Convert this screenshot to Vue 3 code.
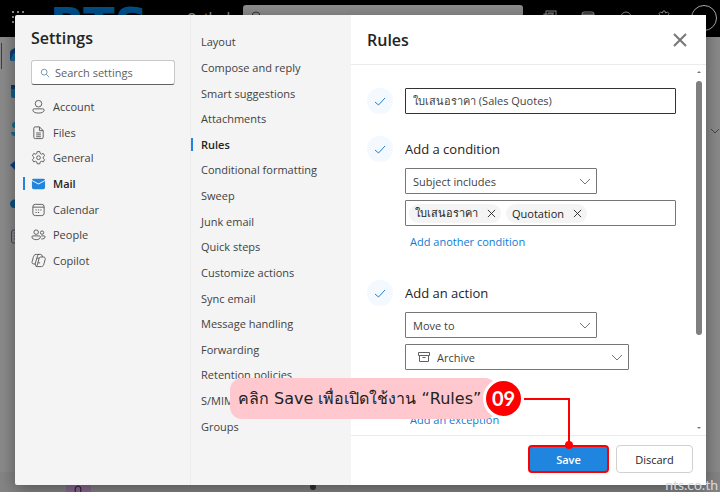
<script setup>
import { ref } from 'vue'

const sections = [
  { id: 'account', label: 'Account' },
  { id: 'files', label: 'Files' },
  { id: 'general', label: 'General' },
  { id: 'mail', label: 'Mail' },
  { id: 'calendar', label: 'Calendar' },
  { id: 'people', label: 'People' },
  { id: 'copilot', label: 'Copilot' }
]

const categories = [
  'Layout',
  'Compose and reply',
  'Smart suggestions',
  'Attachments',
  'Rules',
  'Conditional formatting',
  'Sweep',
  'Junk email',
  'Quick steps',
  'Customize actions',
  'Sync email',
  'Message handling',
  'Forwarding',
  'Retention policies',
  'S/MIME',
  'Groups'
]

const section = ref('mail')
const category = ref('Rules')
const search = ref('')
const ruleName = ref('ใบเสนอราคา (Sales Quotes)')
const condition = ref('Subject includes')
const action = ref('Move to')
const folder = ref('Archive')
const keywords = ref(['ใบเสนอราคา', 'Quotation'])

function removeKeyword(word) {
  keywords.value = keywords.value.filter((k) => k !== word)
}
</script>

<template>
  <div class="page">
    <!-- Dimmed mail app behind the dialog -->
    <div class="app" aria-hidden="true">
      <div class="topbar">
        <svg class="waffle" viewBox="0 0 13 13">
          <g fill="#8b8b8b">
            <rect x="0" y="0" width="2" height="2" /><rect x="5" y="0" width="2" height="2" /><rect x="10" y="0" width="2" height="2" />
            <rect x="0" y="5" width="2" height="2" /><rect x="5" y="5" width="2" height="2" /><rect x="10" y="5" width="2" height="2" />
            <rect x="0" y="10" width="2" height="2" /><rect x="5" y="10" width="2" height="2" /><rect x="10" y="10" width="2" height="2" />
          </g>
        </svg>
        <span class="logo">RTS</span>
        <span class="app-name">Outlook</span>
        <div class="app-search">
          <svg viewBox="0 0 12 12" class="icon12"><circle cx="5" cy="5" r="4" /><path d="M8 8l3.500 3.500" /></svg>
          <span>Search</span>
        </div>
        <svg class="top-icon" viewBox="0 0 14 14"><rect x="3" y="1" width="10" height="8" /><rect x="1" y="4" width="9" height="8" /><path d="M3 6h5M5 3h6" /></svg>
        <svg class="top-icon" viewBox="0 0 14 14"><rect x="1" y="2" width="12" height="11" rx="2" /><path d="M1 4h12M1 5h12" /></svg>
        <svg class="top-icon" viewBox="0 0 14 14"><path d="M2 11V7a5 5 0 0 1 10 0v4z" /></svg>
        <svg class="top-icon" viewBox="0 0 14 14"><path d="M5.500 3L6 1h2l.5 2 2-1 1.500 1.500-1 2 2 .5v2l-2 .5 1 2-1.500 1.500-2-1L8 13H6l-.5-2-2 1L2 10.500l1-2L1 8V6l2-.5-1-2L3.500 2z" /></svg>
        <span class="avatar"></span>
      </div>
      <div class="workspace">
        <svg class="rail" viewBox="0 0 24 220">
          <rect x="1" y="6" width="1" height="26" fill="#0b4a80" />
          <path d="M10 15q1-3 8-5v14h-6q-2 0-2-2z" fill="#0d3f78" />
          <path d="M11 22l2-5 5-3v10h-6z" fill="#1a6aa0" />
          <rect x="11" y="48" width="14" height="13" rx="2" fill="#12628f" />
          <rect x="11" y="48" width="14" height="4" fill="#0a3a66" />
          <circle cx="15" cy="88" r="3" fill="#1a6c92" />
          <path d="M11 95h12v4q-12 2-12-4z" fill="#1a6c92" />
          <path d="M10 128l5-4v9z" fill="#143c86" />
          <path d="M10 166q1-4 8-4v9h-4q-4 0-4-5z" fill="#0c5382" />
          <rect x="11.500" y="193" width="12" height="13" rx="2" fill="#8a8a8a" stroke="#3e4a5a" />
          <path d="M14 196h6M14 199h6M14 202h6" stroke="#3e4a5a" />
        </svg>
        <svg class="side-chevron" viewBox="0 0 8 5"><path d="M0 0l4 4 4-4" /></svg>
      </div>
      <div class="mail-row">
        <svg class="mail-avatar" viewBox="0 0 25 8"><ellipse cx="12" cy="6" rx="3" ry="4" /></svg>
        <span class="mail-dot"></span>
      </div>
    </div>

    <div class="dialog" role="dialog" aria-label="Settings">
      <aside class="sections">
        <h1>Settings</h1>
        <label class="search">
          <svg viewBox="0 0 12 12" class="search-icon"><circle cx="5" cy="5" r="3.500" /><path d="M7.500 7.500L11 11" /></svg>
          <input v-model="search" type="text" placeholder="Search settings" aria-label="Search settings" />
        </label>
        <nav class="section-list">
          <button
            v-for="s in sections"
            :key="s.id"
            type="button"
            class="nav-item"
            :class="{ active: section === s.id }"
            @click="section = s.id"
          >
            <svg class="nav-icon" viewBox="0 0 16 16">
              <template v-if="s.id === 'account'">
                <circle cx="8" cy="5" r="3.500" />
                <path d="M3.500 10.500h9a1.500 1.500 0 0 1 1.500 1.500c0 1.800-2.500 3-6 3s-6-1.200-6-3a1.500 1.500 0 0 1 1.500-1.500z" />
              </template>
              <template v-else-if="s.id === 'files'">
                <path d="M4.500 2H9l4 4v7a1.500 1.500 0 0 1-1.500 1.500h-7A1.500 1.500 0 0 1 3 13V3.500A1.500 1.500 0 0 1 4.500 2z" />
                <path d="M9 2v4h4M5.500 8.500h5M5.500 10.500h5M5.500 12.500h5" />
              </template>
              <template v-else-if="s.id === 'general'">
                <path d="M6.600 1.700h2.800l.4 2 1.300.7 2-.7 1.400 2.400-1.500 1.400v1.400l1.500 1.400-1.400 2.400-2-.7-1.300.7-.4 2H6.600l-.4-2-1.300-.7-2 .7-1.400-2.400L3 8.900V7.500L1.500 6.100l1.400-2.400 2 .7 1.300-.7z" />
                <circle cx="8" cy="8.200" r="2" />
              </template>
              <template v-else-if="s.id === 'mail'">
                <path class="solid" d="M1 5.200l7 3.800 7-3.800v6.800a2 2 0 0 1-2 2H3a2 2 0 0 1-2-2z" />
                <path class="solid" d="M3 3h10a2 2 0 0 1 2 1.300L8 8 1 4.300A2 2 0 0 1 3 3z" />
              </template>
              <template v-else-if="s.id === 'calendar'">
                <rect x="2" y="2.500" width="12" height="12" rx="2.500" />
                <path d="M2 5.500h12M4.800 8.500h1.400M7.300 8.500h1.400M9.800 8.500h1.400M4.800 11.200h1.400M7.300 11.200h1.400" />
              </template>
              <template v-else-if="s.id === 'people'">
                <circle cx="5.500" cy="5.500" r="2.400" />
                <circle cx="11.800" cy="6" r="1.800" />
                <path d="M2 9.500h7a1 1 0 0 1 1 1c0 2-2 3-4.500 3S1 12.500 1 10.500a1 1 0 0 1 1-1zM11 9.500h3a1 1 0 0 1 1 1c0 1.600-1.600 2.500-4 2.200" />
              </template>
              <template v-else>
                <path d="M6 1.500h4.300c1 0 1.300.6 1.600 1.500l.4 1.300h1c1.500 0 2.200 1 1.800 2.500l-1.300 4.700c-.4 1.500-1 3-2.600 3H6.500c-1 0-1.400-.6-1.700-1.500l-.4-1.300H3c-1.600 0-2.200-1-1.800-2.500l1.200-4.500c.5-1.800 1.200-3.200 3-3.200z" />
                <path d="M8.500 1.500c-1 0-1.400 1-1.600 1.700L4.400 11.700M12.300 4.300h-2c-1 0-1.400.6-1.700 1.600L7 11.500c-.3 1.500-.7 2.500-1.500 3M6.300 5.500h2.500M7.500 10.500h2.200" />
              </template>
            </svg>
            <span>{{ s.label }}</span>
          </button>
        </nav>
      </aside>

      <nav class="categories">
        <button
          v-for="c in categories"
          :key="c"
          type="button"
          class="cat-item"
          :class="{ active: category === c }"
          @click="category = c"
        >
          {{ c }}
        </button>
      </nav>

      <section class="panel">
        <header class="panel-head">
          <h2>Rules</h2>
          <button type="button" class="close" aria-label="Close">
            <svg viewBox="0 0 14 14"><path d="M1 1l12 12M13 1L1 13" /></svg>
          </button>
        </header>

        <div class="panel-body">
          <div class="steps">
            <div class="step step-name">
              <span class="check"><svg viewBox="0 0 12 9"><path d="M1 5l3.500 3L11 1" /></svg></span>
              <input v-model="ruleName" class="field name" type="text" aria-label="Rule name" />
            </div>

            <div class="step step-condition">
              <span class="check"><svg viewBox="0 0 12 9"><path d="M1 5l3.500 3L11 1" /></svg></span>
              <div class="step-main">
                <h3>Add a condition</h3>
                <div class="select">
                  <select v-model="condition" class="field" aria-label="Condition">
                    <option>Subject includes</option>
                    <option>From</option>
                  </select>
                  <svg class="chevron" viewBox="0 0 12 7"><path d="M1 1l5 5 5-5" /></svg>
                </div>
                <div class="field tokens">
                  <span v-for="k in keywords" :key="k" class="token">
                    {{ k }}
                    <button type="button" :aria-label="'Remove ' + k" @click="removeKeyword(k)">
                      <svg viewBox="0 0 10 10"><path d="M1 1l8 8M9 1L1 9" /></svg>
                    </button>
                  </span>
                  <input type="text" aria-label="Words to look for" />
                </div>
                <a href="#" class="add">Add another condition</a>
              </div>
            </div>

            <div class="step">
              <span class="check"><svg viewBox="0 0 12 9"><path d="M1 5l3.500 3L11 1" /></svg></span>
              <div class="step-main">
                <h3>Add an action</h3>
                <div class="select">
                  <select v-model="action" class="field" aria-label="Action">
                    <option>Move to</option>
                    <option>Copy to</option>
                  </select>
                  <svg class="chevron" viewBox="0 0 12 7"><path d="M1 1l5 5 5-5" /></svg>
                </div>
                <div class="select folder">
                  <svg class="archive" viewBox="0 0 12 11"><path d="M.5.500h11v3H.5zM1.500 3.500v6h9v-6M4.500 5.500h3" /></svg>
                  <select v-model="folder" class="field" aria-label="Folder">
                    <option>Archive</option>
                    <option>Inbox</option>
                  </select>
                  <svg class="chevron" viewBox="0 0 12 7"><path d="M1 1l5 5 5-5" /></svg>
                </div>
                <a href="#" class="add exception">Add an exception</a>
              </div>
            </div>
          </div>
          <div class="scrollbar" aria-hidden="true">
            <svg viewBox="0 0 4 2"><path d="M0 2l2-2 2 2z" /></svg>
            <span class="thumb"></span>
            <svg viewBox="0 0 4 2"><path d="M0 0h4L2 2z" /></svg>
          </div>
        </div>

        <footer class="panel-foot">
          <button type="button" class="btn save">Save</button>
          <button type="button" class="btn discard">Discard</button>
        </footer>
      </section>
    </div>

    <!-- Tutorial step callout pointing at Save -->
    <div class="callout">
      <p>คลิก Save เพื่อเปิดใช้งาน “Rules”</p>
      <span class="badge">09</span>
      <svg class="connector" viewBox="0 0 50 54"><path d="M0 3h45v44" /><circle cx="45" cy="49" r="4" /></svg>
    </div>
    <span class="watermark">nts.co.th</span>
  </div>
</template>

<style>
body {
  margin: 0;
}
</style>

<style scoped>
.page {
  position: relative;
  box-sizing: border-box;
  min-height: 100vh;
  padding: 15px 14px 7px 15px;
  display: flex;
  overflow: hidden;
  background: #7d7d7d;
  color: #424242;
  font-family: 'Open Sans', 'Noto Sans', sans-serif;
  font-size: 11px;
}

button,
input,
select {
  font: inherit;
  color: inherit;
}

button {
  border: 0;
  background: none;
  padding: 0;
  cursor: pointer;
}

svg {
  fill: none;
  stroke: currentColor;
  flex: none;
}

h1,
h2,
h3,
p {
  margin: 0;
}

/* App backdrop */
.app {
  position: absolute;
  inset: 0;
  display: flex;
  flex-direction: column;
}

.topbar {
  height: 37px;
  box-sizing: border-box;
  display: flex;
  align-items: flex-start;
  padding: 5px 3px 0 12px;
  background: #000;
  color: #8b8b8b;
}

.waffle {
  width: 13px;
  height: 13px;
  margin-top: 6px;
  stroke: none;
}

.logo {
  width: 137px;
  margin-left: 25px;
  font: bold 46px/40px 'DejaVu Sans', sans-serif;
  color: #00508c;
}

.app-name {
  width: 56px;
  margin-top: 4px;
  font-size: 12px;
  font-weight: 600;
  line-height: 18px;
}

.app-search {
  flex: 1;
  display: flex;
  gap: 8px;
  padding: 6px 8px;
  height: 14px;
  border-radius: 3px;
  background: #8d8d8d;
  color: #333;
}

.icon12 {
  width: 12px;
  height: 12px;
}

.top-icon {
  width: 14px;
  height: 14px;
  margin: 5px 0 0 24px;
}

.app-search + .top-icon {
  margin-left: 20px;
}

.avatar {
  width: 24px;
  height: 24px;
  margin-left: 20px;
  border: 1px solid #aaa;
  border-radius: 50%;
}

.workspace {
  flex: 1;
  display: flex;
  justify-content: space-between;
  background: #8b8b8b;
}

.rail {
  width: 24px;
  height: 220px;
  stroke: none;
}

.side-chevron {
  width: 8px;
  height: 5px;
  margin: 92px 1px 0 0;
  color: #444;
}

.mail-row {
  height: 20px;
  display: flex;
  align-items: flex-end;
  padding-left: 66px;
  background: #858585;
}

.mail-avatar {
  width: 25px;
  height: 8px;
  margin-right: 219px;
  background: #8a6b90;
  color: #2f1238;
}

.mail-dot {
  width: 6px;
  height: 6px;
  margin-bottom: 2px;
  border-radius: 50%;
  background: #333;
}

/* Dialog */
.dialog {
  position: relative;
  flex: 1;
  min-width: 0;
  display: flex;
  border-radius: 2px;
  background: #f4f4f4;
  box-shadow: 0 4px 18px rgba(0, 0, 0, 0.4);
}

.sections {
  width: 175px;
  display: flex;
  flex-direction: column;
  border-right: 1px solid #ececec;
}

.sections h1 {
  padding: 11px 16px 0;
  font-size: 16px;
  line-height: 24px;
  font-weight: 600;
  color: #242424;
}

.search {
  display: flex;
  align-items: center;
  gap: 5px;
  height: 23px;
  margin: 10px 15px 0 16px;
  padding: 0 8px;
  border: 1px solid #c8c8c8;
  border-bottom-color: #616161;
  border-radius: 3px;
  background: #fff;
}

.search-icon {
  width: 10px;
  height: 10px;
  color: #5f87a8;
}

.search input {
  flex: 1;
  min-width: 0;
  padding: 0;
  border: 0;
  outline: 0;
  background: none;
}

.search input::placeholder {
  color: #616161;
  opacity: 1;
}

.section-list {
  flex: 1;
  display: grid;
  grid-template-rows: repeat(15, 1fr);
  padding: 9px 0 7px 8px;
}

.nav-item {
  display: flex;
  align-items: center;
  gap: 7px;
}

.nav-item::before {
  content: '';
  width: 2px;
  height: 13px;
  margin-right: -1px;
}

.nav-icon {
  width: 15px;
  height: 15px;
  color: #5a5a5a;
}

.nav-item.active {
  color: #242424;
  font-weight: 600;
}

.nav-item.active::before,
.cat-item.active::before {
  background: #1f85de;
}

.nav-item .solid {
  fill: #1f85de;
  stroke: none;
}

.categories {
  width: 160px;
  display: grid;
  grid-template-rows: repeat(16, 1fr);
  padding: 14px 0 46px;
}

.cat-item {
  display: flex;
  align-items: center;
  gap: 8px;
}

.cat-item::before {
  content: '';
  width: 2px;
  height: 13px;
}

.cat-item.active {
  color: #242424;
  font-weight: 600;
}

/* Rules panel */
.panel {
  flex: 1;
  min-width: 0;
  display: flex;
  flex-direction: column;
  background: #fff;
}

.panel-head {
  height: 49px;
  display: flex;
  align-items: center;
  justify-content: space-between;
  padding: 0 19px 0 16px;
  border-bottom: 1px solid #ebebeb;
}

.panel-head h2 {
  font-size: 16px;
  line-height: 24px;
  font-weight: 600;
  color: #242424;
}

.close svg {
  display: block;
  width: 14px;
  height: 14px;
  stroke-width: 2;
  color: #767676;
}

.panel-body {
  flex: 1;
  display: flex;
  gap: 17px;
  padding-left: 16px;
}

.steps {
  flex: 1;
  min-width: 0;
  padding-top: 23px;
}

.step {
  display: flex;
  gap: 12px;
}

.step-name {
  margin-bottom: 22px;
}

.step-condition {
  margin-bottom: 30px;
}

.check {
  flex: none;
  display: grid;
  place-items: center;
  width: 26px;
  height: 26px;
  border-radius: 50%;
  background: #f3f9fe;
  color: #1f7fd6;
}

.check svg {
  width: 12px;
  height: 9px;
}

.step-main {
  flex: 1;
  min-width: 0;
  display: flex;
  flex-direction: column;
}

.step-main h3 {
  margin-bottom: 6px;
  font-size: 13px;
  line-height: 26px;
  font-weight: 400;
  color: #242424;
}

.field {
  box-sizing: border-box;
  width: 100%;
  height: 26px;
  padding: 0 7px;
  border: 1px solid #767676;
  border-radius: 1px;
  background: #fff;
  outline: 0;
}

.name {
  flex: 1;
  min-width: 0;
  border-color: #333;
}

.select {
  position: relative;
  display: flex;
  align-items: center;
  width: 192px;
  margin-bottom: 6px;
}

.select select {
  appearance: none;
}

.select .chevron {
  position: absolute;
  right: 6px;
  width: 12px;
  height: 7px;
  color: #767676;
  pointer-events: none;
}

.folder {
  width: 224px;
}

.folder select {
  padding-left: 31px;
}

.archive {
  position: absolute;
  left: 13px;
  width: 12px;
  height: 11px;
  color: #616161;
}

.tokens {
  display: flex;
  align-items: center;
  gap: 5px;
  padding: 0 3px;
}

.token {
  display: flex;
  align-items: center;
  gap: 9px;
  height: 19px;
  padding: 0 5px 0 6px;
  border-radius: 10px;
  background: #f4f4f4;
  color: #242424;
}

.token svg {
  display: block;
  width: 9px;
  height: 9px;
}

.tokens input {
  flex: 1;
  min-width: 0;
  border: 0;
  outline: 0;
}

.add {
  align-self: flex-start;
  margin: 8px 0 0 5px;
  line-height: 16px;
  color: #0f7bd6;
  text-decoration: none;
}

.exception {
  margin-top: 36px;
}

.scrollbar {
  width: 12px;
  display: flex;
  flex-direction: column;
  align-items: center;
  padding: 6px 1px 6px 0;
}

.scrollbar svg {
  width: 4px;
  height: 2px;
  fill: #767676;
  stroke: none;
}

.thumb {
  width: 6px;
  height: 71%;
  margin: 8px 0 auto;
  border-radius: 3px;
  background: #7f7f7f;
}

.panel-foot {
  display: flex;
  justify-content: flex-end;
  gap: 7px;
  padding: 9px 13px 12px;
  border-top: 1px solid #ebebeb;
}

.btn {
  box-sizing: border-box;
  height: 28px;
  border-radius: 4px;
  color: #242424;
}

.save {
  width: 81px;
  border: 2px solid #f00;
  background: #1f85de;
  color: #fff;
  font-weight: 600;
}

.discard {
  width: 77px;
  border: 1px solid #d1d1d1;
  background: #fff;
}

/* Callout */
.callout {
  position: absolute;
  right: 196px;
  bottom: 73px;
  display: flex;
  align-items: center;
}

.callout p {
  box-sizing: border-box;
  width: 267px;
  padding-left: 8px;
  border-radius: 12px;
  background: #ffc8cf;
  color: #222;
  font: 16px/41px 'DejaVu Sans', 'Noto Sans', sans-serif;
  white-space: nowrap;
}

.badge {
  width: 35px;
  height: 35px;
  margin-left: -14px;
  border: 3px solid #fff;
  border-radius: 50%;
  background: #f00;
  color: #fff;
  font: bold 20px/35px 'Lato', sans-serif;
  text-align: center;
}

.connector {
  position: absolute;
  left: 294px;
  top: 18px;
  width: 50px;
  height: 54px;
  color: #f00;
  stroke-width: 2;
}

.connector circle {
  fill: currentColor;
  stroke: none;
}

.watermark {
  position: absolute;
  right: 2px;
  bottom: 0;
  color: #d8d8d8;
  font: 14px/14px 'Lato', sans-serif;
}
</style>
